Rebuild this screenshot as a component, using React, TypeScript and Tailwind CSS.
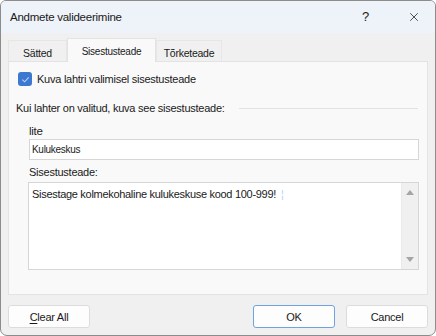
import { X } from "lucide-react";

const ui = { fontFamily: '"Liberation Sans", Arial, sans-serif' };

const tabs = [
  { label: "Sätted", width: "w-[59px]", active: false },
  { label: "Sisestusteade", width: "w-[89px]", active: true },
  { label: "Tõrketeade", width: "w-[66px]", active: false },
];

export default function App() {
  return (
    <div className="h-[336px] w-[436px] overflow-hidden bg-white" style={ui}>
      <div className="flex h-full w-full flex-col overflow-hidden rounded-b-[7px] rounded-t-[6px] border border-[#8c8c8c] bg-[#f0f0f0] text-[11px] leading-[14px] tracking-[-0.25px] text-[#1a1a1a]">
        <div className="flex h-[32px] shrink-0 items-center bg-[#eef3f9] pl-[9px] pr-[14px]">
          <span className="text-[11.5px]">Andmete valideerimine</span>
          <span className="ml-auto mr-[38px] text-[13px]">?</span>
          <X className="h-[14px] w-[14px]" strokeWidth={1.3} />
        </div>

        <div className="flex flex-1 flex-col px-[7px] pt-[5px]">
          <div className="flex h-[23px] items-end">
            {tabs.map((tab) =>
              tab.active ? (
                <div key={tab.label} className={`${tab.width} relative z-10 -mb-px flex h-[24px] items-center justify-center border-x border-t border-[#e3e3e3] bg-[#f9f9f9] pt-[2px] text-[10px]`}>
                  {tab.label}
                </div>
              ) : (
                <div key={tab.label} className={`${tab.width} flex h-[21px] items-center justify-center border-x border-t border-[#e6e6e6] bg-[#f0f0f0] pt-[3px] text-[10.5px]`}>
                  {tab.label}
                </div>
              )
            )}
          </div>

          <div className="flex h-[234px] flex-col border border-[#e3e3e3] bg-[#f9f9f9] pl-[9px] pr-[8px]">
            <label className="mt-[10px] flex h-[14px] items-center gap-[5px]">
              <span className="flex h-[14px] w-[14px] items-center justify-center rounded-[3px] bg-[#3b78cf]">
                <svg viewBox="0 0 10 10" className="h-[9px] w-[9px]">
                  <path d="M1.5 5.2 L4 7.6 L8.6 2.6" fill="none" stroke="#b9d2f2" strokeWidth="1.2" />
                </svg>
              </span>
              <span>Kuva lahtri valimisel sisestusteade</span>
            </label>

            <div className="mt-[15px] flex h-[14px] items-center">
              <span className="-ml-[2px] whitespace-nowrap">Kui lahter on valitud, kuva see sisestusteade:</span>
              <div className="ml-[14px] mr-[1px] h-px flex-1 bg-[#e2e2e2]" />
            </div>

            <div className="ml-[11px] mt-[9px] flex flex-col">
              <span className="text-[11.5px]">lite</span>
              <div className="mt-px flex h-[21px] items-center border border-[#d6d6d6] bg-white pl-[2px] text-[10px] tracking-[-0.3px]">
                Kulukeskus
              </div>

              <span className="mt-[5px]">Sisestusteade:</span>
              <div className="-ml-px mt-[3px] flex h-[88px] border border-[#d6d6d6] bg-white">
                <div className="flex-1 pl-[3px] pt-[4px] text-[11px] tracking-[-0.3px]">
                  Sisestage kolmekohaline kulukeskuse kood 100-999!
                  <span className="ml-[5px] text-[#b7d4ef]">¦</span>
                </div>
                <div className="flex w-[17px] flex-col items-center justify-between border-l border-[#eaeaea] bg-[#f0f0f0] py-[7px]">
                  <svg viewBox="0 0 8 5" className="h-[5px] w-[8px]"><path d="M4 0 L8 5 L0 5 Z" fill="#a5a5a5" /></svg>
                  <svg viewBox="0 0 8 5" className="h-[5px] w-[8px]"><path d="M0 0 L8 0 L4 5 Z" fill="#a5a5a5" /></svg>
                </div>
              </div>
            </div>
          </div>

          <div className="mt-[10px] flex items-center">
            <button className="h-[23px] w-[82px] rounded-[3px] border border-[#dcdcdc] bg-[#fdfdfd] text-[11px]">
              <span className="underline underline-offset-2">C</span>lear All
            </button>
            <button className="ml-auto h-[23px] w-[82px] rounded-[3px] border border-[#6ea3df] bg-[#fdfdfd] text-[11px]">OK</button>
            <button className="ml-[11px] h-[23px] w-[82px] rounded-[3px] border border-[#dcdcdc] bg-[#fdfdfd] text-[11px]">Cancel</button>
          </div>
        </div>
      </div>
    </div>
  );
}
